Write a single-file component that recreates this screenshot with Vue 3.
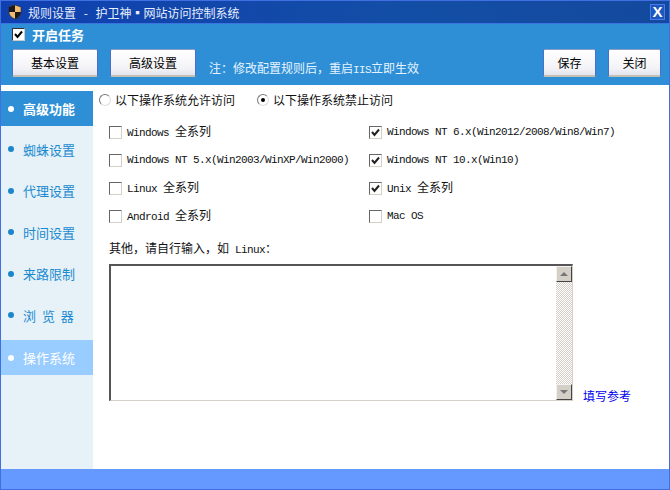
<template>
  <div class="window">
    <div class="titlebar">
      <svg class="logo" width="16" height="16" viewBox="0 0 16 16">
        <path d="M8 1 L14 3 V8 C14 11.5 11 14 8 15 C5 14 2 11.5 2 8 V3 Z" fill="#f2bc70" stroke="#222" stroke-width="0.6" />
        <path d="M8 1 L2 3 V8 H8 Z" fill="#1a1a1a" />
        <path d="M8 8 V15 C11 14 14 11.5 14 8 Z" fill="#1a1a1a" />
      </svg>
      <span class="title-text">规则设置 - 护卫神▪网站访问控制系统</span>
      <span class="close-x">X</span>
    </div>

    <div class="toolbar">
      <div class="task-row">
        <span class="box box-dark">
          <svg width="11" height="11" viewBox="0 0 11 11"><path d="M2 5 L4.5 8 L9 2.5" fill="none" stroke="#000" stroke-width="2" /></svg>
        </span>
        <span class="task-label">开启任务</span>
      </div>
      <div class="btn-row">
        <button class="btn btn-wide">基本设置</button>
        <button class="btn btn-wide">高级设置</button>
        <span class="note">注：修改配置规则后，重启<span class="latin">IIS</span>立即生效</span>
        <button class="btn btn-small btn-save">保存</button>
        <button class="btn btn-small">关闭</button>
      </div>
    </div>

    <div class="main">
      <ul class="side">
        <li
          v-for="item in menu"
          :key="item.label"
          class="side-item"
          :class="item.state"
        >
          <i class="dot"></i>
          <span>{{ item.label }}</span>
        </li>
      </ul>

      <div class="content">
        <div class="mode-row">
          <label class="mode"><span class="radio"></span>以下操作系统允许访问</label>
          <label class="mode"><span class="radio on"></span>以下操作系统禁止访问</label>
        </div>

        <div class="os-grid">
          <div v-for="os in systems" :key="os.label" class="os-item">
            <span class="box">
              <svg v-if="os.checked" width="11" height="11" viewBox="0 0 11 11"><path d="M2 5 L4.5 8 L9 2.5" fill="none" stroke="#222" stroke-width="2" /></svg>
            </span>
            <span class="os-label">{{ os.label }}<span v-if="os.suffix" class="cjk">{{ os.suffix }}</span></span>
          </div>
        </div>

        <div class="other-label">其他，请自行输入，如<span class="latin"> Linux</span>：</div>

        <div class="input-row">
          <div class="textarea">
            <div class="scrollbar">
              <div class="arrow-btn"><span class="tri up"></span></div>
              <div class="track"></div>
              <div class="arrow-btn"><span class="tri down"></span></div>
            </div>
          </div>
          <a class="ref-link">填写参考</a>
        </div>
      </div>
    </div>

    <div class="footer"></div>
  </div>
</template>

<script setup>
const menu = [
  { label: '高级功能', state: 'is-head' },
  { label: '蜘蛛设置', state: 'is-plain' },
  { label: '代理设置', state: 'is-plain' },
  { label: '时间设置', state: 'is-plain' },
  { label: '来路限制', state: 'is-plain' },
  { label: '浏 览 器', state: 'is-plain' },
  { label: '操作系统', state: 'is-active' },
]

const systems = [
  { label: 'Windows ', suffix: '全系列', checked: false },
  { label: 'Windows NT 6.x(Win2012/2008/Win8/Win7)', checked: true },
  { label: 'Windows NT 5.x(Win2003/WinXP/Win2000)', checked: false },
  { label: 'Windows NT 10.x(Win10)', checked: true },
  { label: 'Linux ', suffix: '全系列', checked: false },
  { label: 'Unix ', suffix: '全系列', checked: true },
  { label: 'Android ', suffix: '全系列', checked: false },
  { label: 'Mac OS', checked: false },
]
</script>

<style>
html, body {
  margin: 0;
  background: #fff;
}
</style>

<style scoped>
.window {
  width: 670px;
  height: 490px;
  box-sizing: border-box;
  border: 1px solid #3f6fe0;
  display: flex;
  flex-direction: column;
  font-family: "Noto Sans CJK SC", sans-serif;
  font-size: 12px;
  color: #111;
  background: #fff;
  overflow: hidden;
}
.latin {
  font-family: "Liberation Mono", monospace;
  font-size: 11px;
  letter-spacing: -0.6px;
  white-space: pre;
}

/* title */
.titlebar {
  height: 23px;
  flex-shrink: 0;
  box-sizing: border-box;
  border-bottom: 1px solid #3a74e0;
  background: linear-gradient(90deg, #1040b0 0%, #134ea6 60%, #134a9e 100%);
  display: flex;
  align-items: center;
  padding: 0 4px 0 6px;
  color: #fff;
}
.logo {
  margin-right: 5px;
}
.title-text {
  font-size: 12px;
  word-spacing: 5px;
  color: #e8eefc;
}
.close-x {
  margin-left: auto;
  width: 13px;
  height: 14px;
  border: 1px solid #4a7ae8;
  background: #1c56c0;
  color: #fff;
  font: bold 15px/14px "Liberation Sans", sans-serif;
  text-align: center;
}

/* toolbar */
.toolbar {
  height: 61px;
  flex-shrink: 0;
  box-sizing: border-box;
  background: #2e8fd6;
  padding: 0 8px 0 11px;
}
.task-row {
  display: flex;
  align-items: center;
  height: 21px;
  gap: 7px;
}
.task-label {
  font-weight: 700;
  font-size: 13px;
  color: #fff;
}
.btn-row {
  display: flex;
  align-items: center;
  margin-top: 4px;
}
.btn {
  box-sizing: border-box;
  padding: 0;
  height: 28px;
  border: 1px solid #4a6fc8;
  border-top-color: #8a9cc4;
  border-bottom: 2px solid #c4c0b4;
  border-radius: 2px;
  background: linear-gradient(180deg, #ffffff 0%, #f4f4f8 70%, #e4e4ee 100%);
  font-family: "Noto Sans CJK SC", sans-serif;
  font-size: 12px;
  color: #000;
}
.btn-wide {
  width: 86px;
  margin-right: 12px;
}
.btn-small {
  width: 53px;
  margin-left: 12px;
}
.btn-save {
  margin-left: auto;
}
.note {
  font-size: 12px;
  color: #e6f3ff;
  margin: 9px 0 0 1px;
}

/* main */
.main {
  flex: 1;
  display: flex;
  min-height: 0;
}
.side {
  list-style: none;
  width: 92px;
  flex-shrink: 0;
  margin: 6px 0 0;
  padding: 0;
  background: #e6f2f8;
  display: flex;
  flex-direction: column;
  gap: 6.5px;
}
.side-item {
  height: 35px;
  box-sizing: border-box;
  display: flex;
  align-items: center;
  padding-left: 7px;
  gap: 9px;
  font-size: 13px;
  word-spacing: 3px;
  color: #1c8ad0;
}
.dot {
  width: 6px;
  height: 6px;
  border-radius: 50%;
  background: #1c86cc;
}
.is-plain {
  padding-bottom: 2px;
}
.is-head {
  background: #2e8fd6;
  color: #fff;
  font-weight: 700;
}
.is-active {
  background: #99ccff;
  color: #fff;
}
.is-head .dot,
.is-active .dot {
  background: #fff;
}

/* content */
.content {
  flex: 1;
  padding: 0 0 0 6px;
  min-width: 0;
}
.mode-row {
  display: flex;
  height: 29px;
  align-items: center;
}
.mode {
  display: flex;
  align-items: center;
  gap: 4px;
  font-size: 12px;
  margin-right: 22px;
}
.radio {
  width: 12px;
  height: 12px;
  box-sizing: border-box;
  border: 1px solid;
  border-color: #777 #ddd #ddd #777;
  border-radius: 50%;
  background: #fff;
  position: relative;
}
.radio.on::after {
  content: "";
  position: absolute;
  left: 3px;
  top: 3px;
  width: 4px;
  height: 4px;
  border-radius: 50%;
  background: #000;
}
.os-grid {
  display: grid;
  grid-template-columns: 260px 1fr;
  grid-auto-rows: 28px;
  padding-left: 10px;
  margin-top: 4px;
}
.os-item {
  display: flex;
  align-items: center;
  gap: 5px;
}
.box {
  width: 11px;
  height: 11px;
  flex-shrink: 0;
  box-sizing: content-box;
  border: 1px solid;
  border-color: #666 #d4d0c8 #d4d0c8 #666;
  background: #fff;
  display: flex;
  align-items: center;
  justify-content: center;
}
.box-dark {
  border-color: #333 #ccc #ccc #333;
}
.os-label {
  font-family: "Liberation Mono", monospace;
  font-size: 11px;
  letter-spacing: -0.6px;
  line-height: 14px;
  white-space: pre;
}
.cjk {
  font-family: "Noto Sans CJK SC", sans-serif;
  font-size: 12px;
  letter-spacing: 0;
  line-height: 14px;
}
.other-label {
  font-size: 12px;
  padding-left: 10px;
  margin-top: 11px;
  line-height: 14px;
  white-space: nowrap;
}
.input-row {
  display: flex;
  align-items: flex-end;
  margin: 7px 0 0 10px;
}
.textarea {
  width: 464px;
  height: 137px;
  box-sizing: border-box;
  border: 1px solid;
  border-width: 2px 1px 1px 2px;
  border-color: #555 #d4d0c8 #d4d0c8 #555;
  background: #fff;
  display: flex;
  justify-content: flex-end;
}
.scrollbar {
  width: 16px;
  display: flex;
  flex-direction: column;
}
.arrow-btn {
  height: 16px;
  box-sizing: border-box;
  background: #d4d0c8;
  border: 1px solid;
  border-color: #f4f2ee #444 #444 #f4f2ee;
  display: flex;
  align-items: center;
  justify-content: center;
}
.track {
  flex: 1;
  background-color: #fff;
  background-image: conic-gradient(#d4d0c8 25%, #fff 25% 50%, #d4d0c8 50% 75%, #fff 75%);
  background-size: 2px 2px;
}
.tri {
  width: 0;
  height: 0;
  border-left: 4px solid transparent;
  border-right: 4px solid transparent;
}
.tri.up {
  border-bottom: 4px solid #777;
}
.tri.down {
  border-top: 4px solid #777;
}
.ref-link {
  font-size: 12px;
  color: #0000ee;
  margin-left: 10px;
  line-height: 14px;
  margin-bottom: -2px;
}

.footer {
  height: 20px;
  flex-shrink: 0;
  background: #6699ff;
}
</style>
